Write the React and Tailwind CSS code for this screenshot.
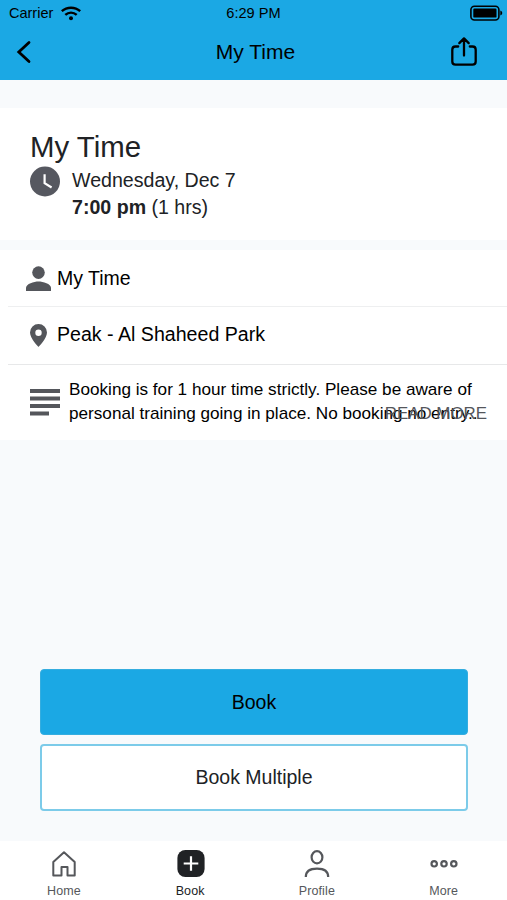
function StatusBar() {
  return (
    <div className="grid h-6 grid-cols-3 items-center pl-[9px] pr-1">
      <div className="flex items-center gap-2">
        <span className="pt-px text-[14.5px] leading-6">Carrier</span>
        <svg className="mt-px h-[15px] w-5" viewBox="0 0 20 15" fill="none" stroke="black" strokeWidth="2.4">
          <path d="M.8 5.200C6 .5 14 .5 19.200 5.200M4.300 8.900C7.600 5.800 12.400 5.800 15.700 8.900" />
          <circle cx="10" cy="12.200" r="2" fill="black" stroke="none" />
        </svg>
      </div>
      <span className="mr-[5px] text-center text-[14.6px] leading-6">6:29 PM</span>
      <svg className="h-4 w-[33px] justify-self-end" viewBox="0 0 33 16">
        <rect x="0.900" y="1.200" width="28" height="13.800" rx="3.500" fill="none" stroke="black" strokeWidth="1.600" />
        <rect x="3.300" y="3.600" width="23.200" height="9" rx="1.200" />
        <path d="M30.300 5.500q2 .6 2 2.500t-2 2.500z" />
      </svg>
    </div>
  );
}

function Header() {
  return (
    <header className="h-20 bg-[#1ba8e4] text-black">
      <StatusBar />
      <div className="grid h-14 grid-cols-3 items-center pl-4 pr-[30px]">
        <svg className="h-6 w-4" viewBox="0 0 16 24" fill="none" stroke="black" strokeWidth="2.800" strokeLinecap="round">
          <path d="M13 2.500 2.800 12 13 21.500" />
        </svg>
        <h1 className="ml-[18px] text-center text-[21px]">My Time</h1>
        <svg className="h-8 w-7 justify-self-end" viewBox="0 0 28 32" fill="none" stroke="black" strokeWidth="2.300" strokeLinecap="round" strokeLinejoin="round">
          <path d="M9.200 10.500H6.500q-3.200 0-3.200 3.200v11.800q0 3.200 3.200 3.200h17q3.200 0 3.200-3.200V13.700q0-3.200-3.200-3.200h-2.700M15 19.500V2.500M10.300 7.100 15 2.400l4.700 4.700" />
        </svg>
      </div>
    </header>
  );
}

function Summary() {
  return (
    <section className="mt-7 h-[132px] bg-white pl-[30px] pt-[21px] text-[#202225]">
      <h2 className="text-[29.4px] leading-9">My Time</h2>
      <div className="flex gap-3">
        <svg className="mt-px h-[31px] w-[30px]" viewBox="0 0 30 31">
          <circle cx="15" cy="15.500" r="15" fill="#565860" />
          <path d="M14.600 8.200v9l7 4.300" fill="none" stroke="white" strokeWidth="2.200" />
        </svg>
        <div className="pt-0.5 text-[19.600px] leading-[27px]">
          <p>Wednesday, Dec 7</p>
          <p><b>7:00 pm</b> (1 hrs)</p>
        </div>
      </div>
    </section>
  );
}

function Details() {
  return (
    <section className="mt-2.5 h-[190px] bg-white pl-2 text-black">
      <div className="flex h-[57px] items-center border-b border-[#eeeff0] pl-[18px] text-[19.500px]">
        <svg className="mr-1.5 mt-px h-[26px] w-[25px]" viewBox="0 0 25 26" fill="#54565b">
          <circle cx="12.500" cy="6.600" r="6.300" />
          <path d="M0 25v-3.200c0-4 8-6.300 12.500-6.300S25 17.800 25 21.800V25z" />
        </svg>
        <span className="pt-0.5">My Time</span>
      </div>
      <div className="flex h-[58px] items-center border-b border-[#e7e8e9] pl-[22px] text-[19.600px]">
        <svg className="mr-2.5 h-[23px] w-[17px]" viewBox="0 0 17 23" fill="#54565b">
          <path fillRule="evenodd" d="M8.500 0A8.500 8.500 0 0 0 0 8.500C0 14.500 8.500 23 8.500 23S17 14.500 17 8.500A8.500 8.500 0 0 0 8.500 0Zm0 5.500a3.200 3.200 0 1 1 0 6.400 3.200 3.200 0 0 1 0-6.400Z" />
        </svg>
        <span className="pb-0.5">Peak - Al Shaheed Park</span>
      </div>
      <div className="relative flex h-[75px] pl-[22px] pt-3">
        <svg className="mr-[9px] mt-3 h-[27px] w-[30px] shrink-0" viewBox="0 0 30 27" fill="#54565b">
          <path d="M0 0h30v4H0zM0 7.500h30v4H0zM0 15h30v4H0zM0 22.500h19v4H0z" />
        </svg>
        <p className="whitespace-nowrap text-[17.150px] leading-6">
          Booking is for 1 hour time strictly. Please be aware of<br />
          personal training going in place. No booking no entry..
        </p>
        <span className="absolute right-5 top-[37px] text-[16.900px] leading-6 text-[#54565b]">READ MORE</span>
      </div>
    </section>
  );
}

function TabBar() {
  return (
    <nav className="grid h-[59px] grid-cols-4 bg-white text-[12.500px] text-[#55575b]">
      <div className="flex flex-col items-center pt-2">
        <svg className="ml-px h-7 w-7" viewBox="0 0 28 28" fill="none" stroke="#55575b" strokeWidth="2">
          <path d="M3.300 13 14 3.200 24.700 13v13.500h-7.200V18h-6v8.500H3.300z" strokeLinejoin="round" />
        </svg>
        <span className="mt-[5px] pl-px leading-[18px] tracking-[0.1px]">Home</span>
      </div>
      <div className="flex flex-col items-center pt-2 text-[#202225]">
        <svg className="ml-px h-7 w-7" viewBox="0 0 28 28">
          <rect x="0.400" y="1" width="27.200" height="27" rx="8" fill="#202225" />
          <path d="M14 7.200v14.600M6.700 14.500h14.600" stroke="white" strokeWidth="2.200" />
        </svg>
        <span className="mt-[5px] leading-[18px] tracking-[0.1px]">Book</span>
      </div>
      <div className="flex flex-col items-center pt-2">
        <svg className="h-7 w-7" viewBox="0 0 28 28" fill="none" stroke="#55575b" strokeWidth="2.200">
          <ellipse cx="14" cy="8.300" rx="5.400" ry="6.100" />
          <path d="M2.800 28c0-5.500 4-8.300 11.200-8.300S25.200 22.500 25.200 28" />
        </svg>
        <span className="mt-[5px] leading-[18px] tracking-[0.1px]">Profile</span>
      </div>
      <div className="flex flex-col items-center pt-2">
        <svg className="h-7 w-7" viewBox="0 0 28 28" fill="none" stroke="#55575b" strokeWidth="2.200">
          <circle cx="4.200" cy="14.800" r="2.700" />
          <circle cx="14" cy="14.800" r="2.700" />
          <circle cx="23.800" cy="14.800" r="2.700" />
        </svg>
        <span className="mt-[5px] leading-[18px] tracking-[0.1px]">More</span>
      </div>
    </nav>
  );
}

export default function App() {
  return (
    <main className="flex h-[900px] w-[507px] flex-col overflow-hidden bg-[#f8fafc] font-['Liberation_Sans',Arial,sans-serif]">
      <Header />
      <Summary />
      <Details />
      <div className="mb-[30px] ml-10 mr-[39px] mt-auto flex flex-col gap-[9px] text-[19.500px]">
        <button className="h-[66px] rounded-[4px] border border-[#35addf] bg-[#1ba8e4] pt-0.5 text-black">Book</button>
        <button className="h-[67px] rounded-[4px] border-2 border-[#7ccbe9] bg-white pt-px text-[#202225]">Book Multiple</button>
      </div>
      <TabBar />
    </main>
  );
}
